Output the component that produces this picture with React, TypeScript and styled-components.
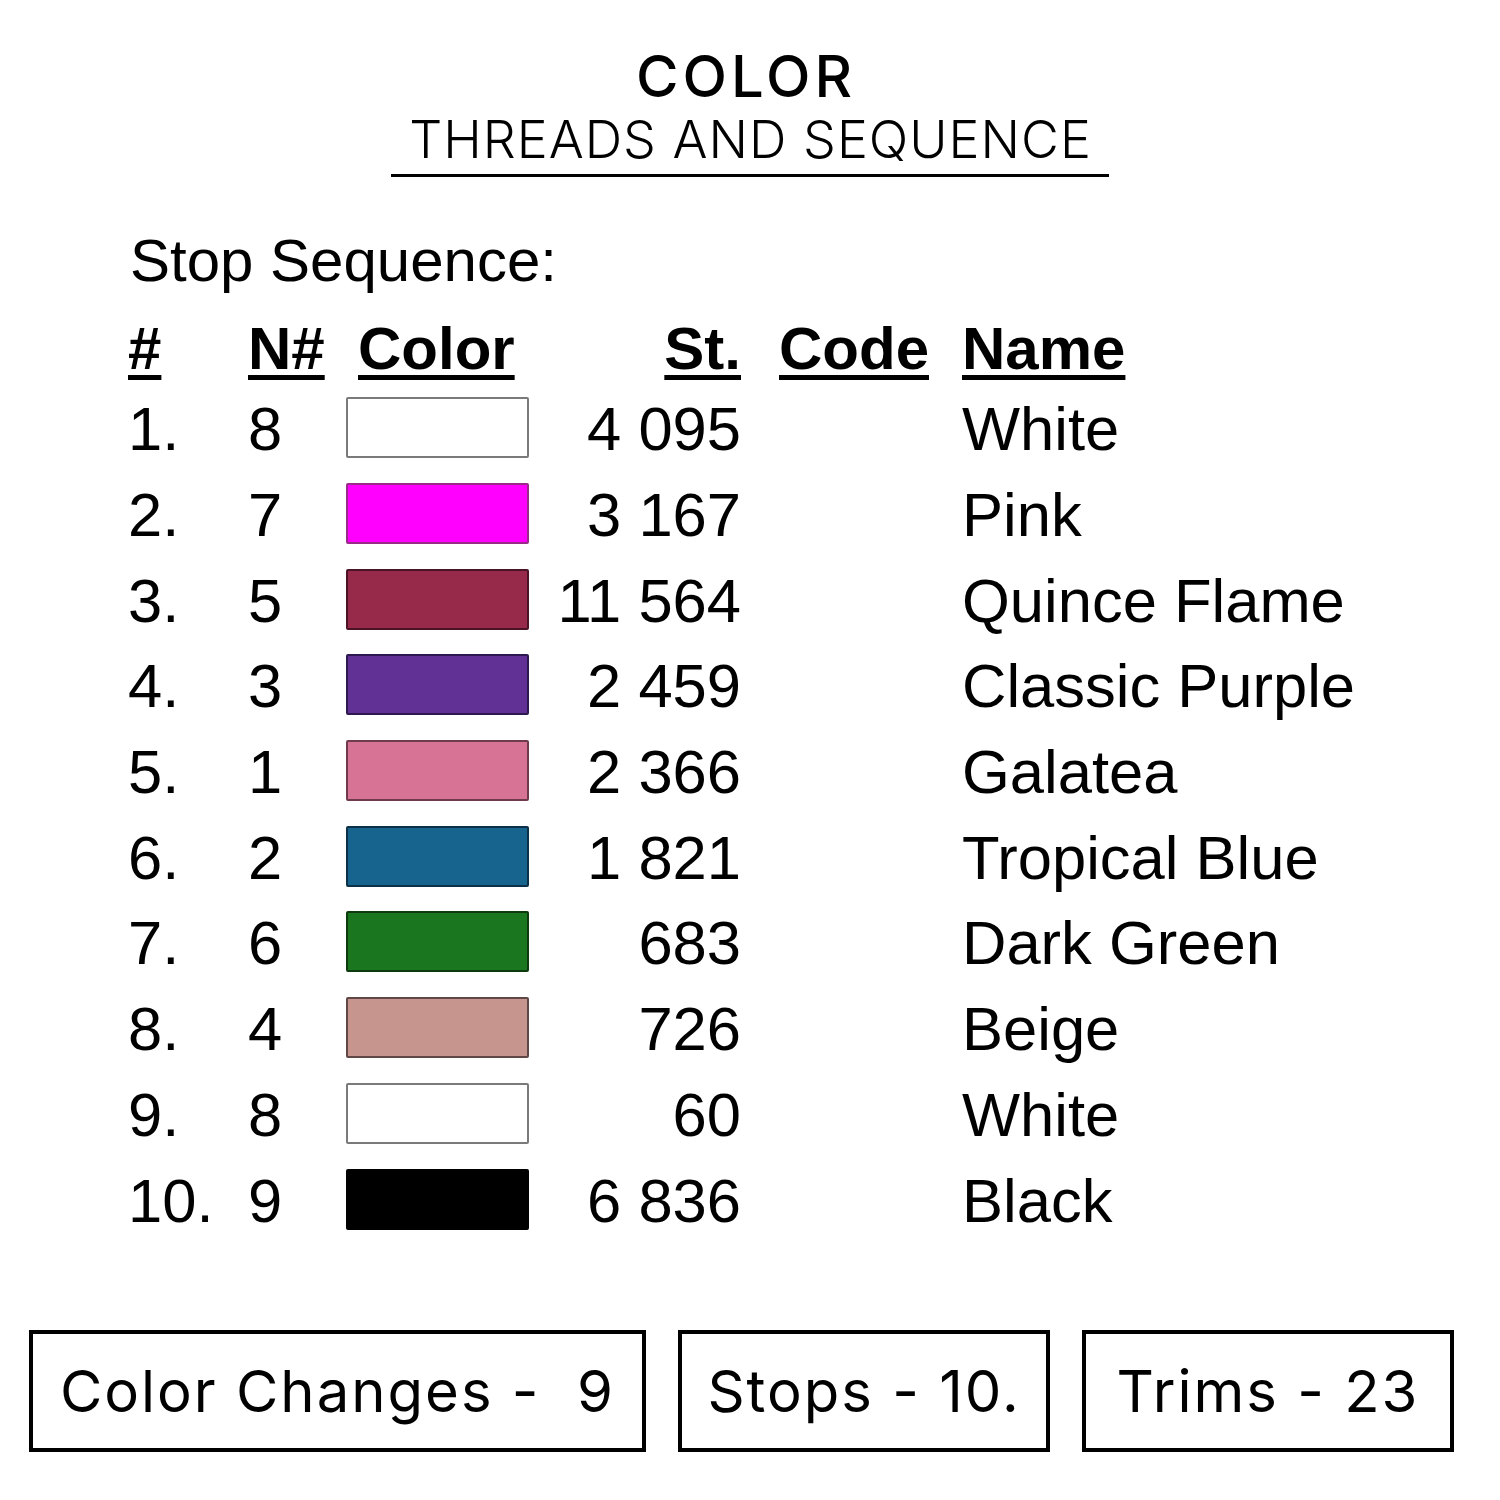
import styled, { createGlobalStyle } from 'styled-components';

const GlobalStyle = createGlobalStyle`
  html, body {
    margin: 0;
    padding: 0;
    background: #ffffff;
  }
`;

const Page = styled.div`
  width: 1500px;
  height: 1500px;
  background: #ffffff;
  color: #000000;
  display: flex;
  flex-direction: column;
  overflow: hidden;
`;

const Header = styled.header`
  display: flex;
  flex-direction: column;
  align-items: center;
  padding-top: 44px;
  font-family: Inter, "Open Sans", sans-serif;
`;

const Title = styled.h1`
  margin: 0 8px 0 0;
  font-size: 58px;
  font-weight: 500;
  line-height: 64px;
  letter-spacing: 4px;
`;

const Subtitle = styled.h2`
  margin: 4px 0 0;
  font-size: 52px;
  font-weight: 300;
  line-height: 56px;
  padding: 0 17px 6px 18px;
  border-bottom: 3px solid #000;
  letter-spacing: 1px;
`;

const Section = styled.section`
  padding: 54px 0 0 128px;
  font-family: "Liberation Sans", Arial, sans-serif;
`;

const SectionLabel = styled.div`
  font-size: 60px;
  line-height: 60px;
  margin-left: 2px;
`;

const Table = styled.div`
  margin-top: 21px;
  display: grid;
  grid-template-columns: 120px 98px 183px 212px 221px auto;
  grid-template-rows: 73px;
  grid-auto-rows: 85.7px;
  align-items: center;
`;

const HeadCell = styled.div<{ $align?: 'left' | 'right'; $indent?: number }>`
  font-size: 60px;
  font-weight: 700;
  text-decoration: underline;
  text-decoration-thickness: 5px;
  text-underline-offset: 6px;
  text-align: ${(p) => p.$align ?? 'left'};
  padding-left: ${(p) => p.$indent ?? 0}px;
  align-self: start;
  line-height: 74px;
  height: 74px;
`;

const Cell = styled.div<{ $align?: 'left' | 'right' }>`
  font-size: 61.5px;
  line-height: 70px;
  padding-top: 3px;
  text-align: ${(p) => p.$align ?? 'left'};
  white-space: nowrap;
`;

const Swatch = styled.div<{ $color: string; $edge: string }>`
  width: 183px;
  height: 61px;
  box-sizing: border-box;
  background: ${(p) => p.$color};
  border: 2px solid ${(p) => p.$edge};
  border-radius: 2px;
`;

const Footer = styled.footer`
  margin-top: auto;
  margin-bottom: 48px;
  display: flex;
  gap: 32px;
  padding-left: 29px;
  font-family: Inter, "Open Sans", sans-serif;
`;

const StatBox = styled.div<{ $width: number }>`
  width: ${(p) => p.$width}px;
  height: 122px;
  box-sizing: border-box;
  border: 4px solid #000;
  display: flex;
  align-items: center;
  justify-content: center;
  font-size: 58px;
  font-weight: 400;
  letter-spacing: 2px;
  white-space: pre;
`;

const stops = [
  { n: 8, color: '#ffffff', edge: '#7a7a7a', st: '4 095', name: 'White' },
  { n: 7, color: '#ff00ff', edge: '#9a2a8a', st: '3 167', name: 'Pink' },
  { n: 5, color: '#97294a', edge: '#4a1426', st: '11 564', name: 'Quince Flame' },
  { n: 3, color: '#623196', edge: '#2e1850', st: '2 459', name: 'Classic Purple' },
  { n: 1, color: '#d77496', edge: '#6e3a4c', st: '2 366', name: 'Galatea' },
  { n: 2, color: '#17658f', edge: '#0b3048', st: '1 821', name: 'Tropical Blue' },
  { n: 6, color: '#1b7620', edge: '#0e3a10', st: '683', name: 'Dark Green' },
  { n: 4, color: '#c5958e', edge: '#5e4744', st: '726', name: 'Beige' },
  { n: 8, color: '#ffffff', edge: '#7a7a7a', st: '60', name: 'White' },
  { n: 9, color: '#000000', edge: '#000000', st: '6 836', name: 'Black' },
];

export default function App() {
  return (
    <Page>
      <GlobalStyle />
      <Header>
        <Title>COLOR</Title>
        <Subtitle>THREADS AND SEQUENCE</Subtitle>
      </Header>

      <Section>
        <SectionLabel>Stop Sequence:</SectionLabel>
        <Table>
          <HeadCell>#</HeadCell>
          <HeadCell>N#</HeadCell>
          <HeadCell $indent={12}>Color</HeadCell>
          <HeadCell $align="right">St.</HeadCell>
          <HeadCell $indent={38}>Code</HeadCell>
          <HeadCell>Name</HeadCell>

          {stops.map((s, i) => [
            <Cell key={`i${i}`}>{i + 1}.</Cell>,
            <Cell key={`n${i}`}>{s.n}</Cell>,
            <Swatch key={`c${i}`} $color={s.color} $edge={s.edge} />,
            <Cell key={`s${i}`} $align="right">{s.st}</Cell>,
            <Cell key={`k${i}`} />,
            <Cell key={`m${i}`}>{s.name}</Cell>,
          ])}
        </Table>
      </Section>

      <Footer>
        <StatBox $width={617}>{'Color Changes -  9'}</StatBox>
        <StatBox $width={372}>Stops - 10.</StatBox>
        <StatBox $width={372}>Trims - 23</StatBox>
      </Footer>
    </Page>
  );
}
